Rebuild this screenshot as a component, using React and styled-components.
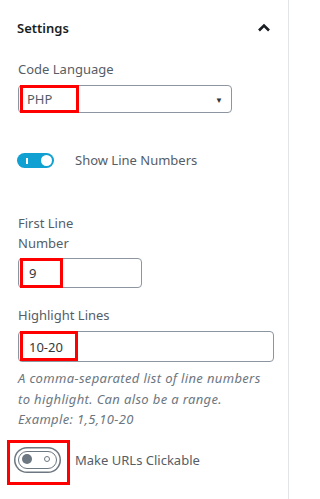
import styled, { createGlobalStyle } from 'styled-components';

const GlobalStyle = createGlobalStyle`
  body {
    margin: 0;
    background: #fff;
    font-family: "Noto Sans", "Open Sans", sans-serif;
  }
`;

const Panel = styled.div`
  width: 289px;
  min-height: 499px;
  box-sizing: border-box;
  border-right: 1px solid #e2e4e7;
  background: #fff;
`;

const Header = styled.div`
  height: 55px;
  padding: 0 17px 0 17px;
  display: flex;
  align-items: center;
  justify-content: space-between;
  font-size: 13px;
  font-weight: 600;
  color: #191e23;
`;

const Body = styled.div`
  padding: 4px 16px 0 18px;
  display: flex;
  flex-direction: column;
`;

const Label = styled.div`
  font-size: 13px;
  line-height: 20px;
  color: #555d66;
  max-width: ${(p) => p.$narrow ? '80px' : 'none'};
  margin-top: ${(p) => p.$top || 0}px;
  margin-bottom: ${(p) => p.$bottom || 6}px;
`;

const Field = styled.div`
  position: relative;
  width: ${(p) => p.$width}px;
`;

const Select = styled.div`
  height: 28px;
  box-sizing: border-box;
  border: 1px solid #8d96a0;
  border-radius: 4px;
  padding: 0 8px 0 8px;
  display: flex;
  align-items: center;
  justify-content: space-between;
  font-size: 13px;
  color: #555d66;
`;

const Arrow = styled.span`
  font-size: 8px;
  color: #32373c;
`;

const Input = styled.div`
  height: ${(p) => p.$height}px;
  box-sizing: border-box;
  border: 1px solid #8d96a0;
  border-radius: 4px;
  padding: 0 10px;
  display: flex;
  align-items: center;
  font-size: 13px;
  color: #32373c;
`;

const Mark = styled.span`
  position: absolute;
  left: ${(p) => p.$left}px;
  top: ${(p) => p.$top}px;
  width: ${(p) => p.$w}px;
  height: ${(p) => p.$h}px;
  box-sizing: border-box;
  border: 3px solid #f00;
  pointer-events: none;
`;

const ToggleRow = styled.div`
  display: grid;
  grid-template-columns: 57px 1fr;
  align-items: center;
  margin-top: ${(p) => p.$top}px;
  min-height: 20px;
  font-size: 13px;
  color: #555d66;
`;

const ToggleWrap = styled.div`
  position: relative;
  display: flex;
  align-items: center;
`;

const TrackOn = styled.span`
  position: relative;
  width: 37px;
  height: 15px;
  margin-left: -1px;
  border-radius: 8px;
  background: #11a0d2;
`;

const OnBar = styled.span`
  position: absolute;
  left: 9px;
  top: 5px;
  width: 2px;
  height: 6px;
  background: #fff;
`;

const KnobOn = styled.span`
  position: absolute;
  right: 2px;
  top: 2px;
  width: 11px;
  height: 11px;
  border-radius: 50%;
  background: #fff;
`;

const TrackOff = styled.span`
  position: relative;
  width: 39px;
  height: 18px;
  box-sizing: border-box;
  border: 1.5px solid #6c7781;
  border-radius: 9px;
  background: #fff;
  box-shadow: 0 0 0 2.5px #fff, 0 0 0 4px #6c7781;
`;

const KnobOff = styled.span`
  position: absolute;
  left: 2.5px;
  top: 2.5px;
  width: 10px;
  height: 10px;
  border-radius: 50%;
  background: #6c7781;
`;

const OffRing = styled.span`
  position: absolute;
  right: 6px;
  top: 4.5px;
  width: 6px;
  height: 6px;
  box-sizing: border-box;
  border: 1.5px solid #6c7781;
  border-radius: 50%;
`;

const Help = styled.p`
  margin: 6px 0 0;
  max-width: 254px;
  font-size: 13px;
  font-style: italic;
  letter-spacing: 0.35px;
  line-height: 20.5px;
  color: #6c7781;
`;

const Chevron = () => (
  <svg width="14" height="9" viewBox="0 0 14 9">
    <polyline points="2,7.5 7,2.5 12,7.5" fill="none" stroke="#191e23" strokeWidth="2.6" />
  </svg>
);

const App = () => {
  return (
    <Panel>
      <GlobalStyle />
      <Header>
        <span>Settings</span>
        <Chevron />
      </Header>
      <Body>
        <Label>Code Language</Label>
        <Field $width={214}>
          <Select>
            <span>PHP</span>
            <Arrow>▼</Arrow>
          </Select>
          <Mark $left={2} $top={0} $w={59} $h={28} />
        </Field>

        <ToggleRow $top={37}>
          <ToggleWrap>
            <TrackOn>
              <OnBar />
              <KnobOn />
            </TrackOn>
          </ToggleWrap>
          <span>Show Line Numbers</span>
        </ToggleRow>

        <Label $narrow $top={43} $bottom={5}>First Line Number</Label>
        <Field $width={124}>
          <Input $height={30}>9</Input>
          <Mark $left={2} $top={0} $w={43} $h={30} />
        </Field>

        <Label $top={17} $bottom={6}>Highlight Lines</Label>
        <Field $width={256}>
          <Input $height={31}>10-20</Input>
          <Mark $left={2} $top={0} $w={58} $h={30} />
        </Field>
        <Help>A comma-separated list of line numbers to highlight. Can also be a range. Example: 1,5,10-20</Help>

        <ToggleRow $top={20}>
          <ToggleWrap>
            <TrackOff>
              <KnobOff />
              <OffRing />
            </TrackOff>
            <Mark $left={-11} $top={-11} $w={63} $h={45} />
          </ToggleWrap>
          <span>Make URLs Clickable</span>
        </ToggleRow>
      </Body>
    </Panel>
  );
};

export default App;
